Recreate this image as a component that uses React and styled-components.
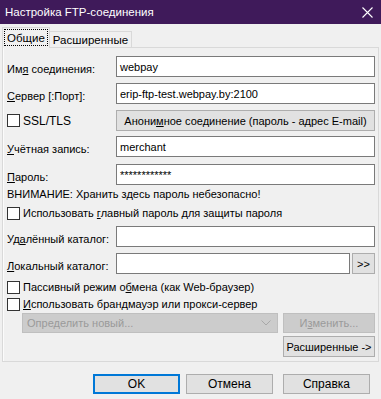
import React from 'react';
import styled, { createGlobalStyle } from 'styled-components';

const Global = createGlobalStyle`
  html, body { margin: 0; padding: 0; background: #f0f0f0; }
  body {
    font-family: "Liberation Sans", Arial, sans-serif;
    font-size: 11px;
    color: #000;
  }
  #root { width: 381px; height: 399px; }
`;

const Window = styled.div`
  width: 381px;
  height: 399px;
  background: #f0f0f0;
  display: flex;
  flex-direction: column;
  overflow: hidden;
`;

const TitleBar = styled.div`
  flex: none;
  height: 24px;
  background: #3f1a5a;
  color: #fff;
  display: flex;
  align-items: center;
  padding: 0 8px 0 5px;
  font-size: 11.5px;
`;

const Title = styled.span`
  flex: 1;
  white-space: nowrap;
`;

const TabStrip = styled.div`
  flex: none;
  height: 23px;
  display: flex;
  align-items: flex-end;
  padding-left: 2px;
  position: relative;
  z-index: 1;
`;

const Tab = styled.div`
  box-sizing: border-box;
  height: ${p => (p.$active ? 21 : 16)}px;
  margin-bottom: ${p => (p.$active ? -1 : 0)}px;
  padding: 0 ${p => (p.$active ? 1 : 3)}px;
  border: 1px solid #d9d9d9;
  border-bottom: none;
  border-left: ${p => (p.$active ? '1px solid #d9d9d9' : 'none')};
  background: #f0f0f0;
  display: flex;
  align-items: ${p => (p.$active ? 'flex-start' : 'center')};
  padding-top: ${p => (p.$active ? 1 : 0)}px;
  white-space: nowrap;
  font-size: 11.5px;
`;

const Focus = styled.span`
  border: 1px dotted #000;
  padding: 0 2px;
  height: 15px;
  display: flex;
  align-items: center;
`;

const Panel = styled.div`
  box-sizing: border-box;
  flex: none;
  height: 315px;
  margin: 0 2px 0 2px;
  border: 1px solid #d9d9d9;
  box-shadow: inset 1px 0 0 #fbfbfb;
  background: #f0f0f0;
  padding: 8px 3px 0 4px;
  display: flex;
  flex-direction: column;
`;

const Row = styled.div`
  display: flex;
  align-items: center;
  height: ${p => p.$h || 21}px;
  margin-top: ${p => p.$mt || 0}px;
  padding-left: ${p => p.$indent || 0}px;
  justify-content: ${p => (p.$end ? 'flex-end' : 'flex-start')};
`;

const Label = styled.label`
  flex: none;
  width: 109px;
  padding-top: ${p => p.$dy ?? 4}px;
  white-space: nowrap;
`;

const Input = styled.div`
  box-sizing: border-box;
  flex: ${p => (p.$w ? 'none' : 1)};
  width: ${p => (p.$w ? `${p.$w}px` : 'auto')};
  height: ${p => p.$h || 21}px;
  background: #fff;
  border: 1px solid #7a7a7a;
  padding: 0 3px;
  display: flex;
  align-items: center;
  white-space: nowrap;
  overflow: hidden;
`;

const Button = styled.div`
  box-sizing: border-box;
  flex: ${p => (p.$grow ? 1 : 'none')};
  width: ${p => (p.$w ? `${p.$w}px` : 'auto')};
  height: ${p => p.$h || 21}px;
  margin-left: ${p => p.$ml || 0}px;
  margin-right: ${p => p.$mr || 0}px;
  background: ${p => (p.$disabled ? '#cccccc' : '#e1e1e1')};
  border: ${p => (p.$default ? '2px solid #0078d7' : p.$disabled ? '1px solid #bfbfbf' : '1px solid #adadad')};
  color: ${p => (p.$disabled ? '#9a9a9a' : '#000')};
  display: flex;
  align-items: center;
  justify-content: center;
  white-space: nowrap;
  font-size: ${p => p.$fs || 11}px;
`;

const Combo = styled.div`
  box-sizing: border-box;
  flex: none;
  width: 256px;
  height: 20px;
  background: #cccccc;
  border: 1px solid #bfbfbf;
  color: #9a9a9a;
  display: flex;
  align-items: center;
  padding: 0 6px 0 4px;
`;

const ComboText = styled.span`
  flex: 1;
`;

const CheckRow = styled.div`
  display: flex;
  align-items: center;
  height: 16px;
  margin-top: ${p => p.$mt || 0}px;
  white-space: nowrap;
`;

const Box = styled.span`
  box-sizing: border-box;
  flex: none;
  width: 13px;
  height: 13px;
  background: #fff;
  border: 1px solid #333;
  margin-right: ${p => p.$gap || 3}px;
`;

const CheckLabel = styled.div`
  flex: none;
  width: 109px;
  display: flex;
  align-items: center;
  font-size: ${p => p.$fs || 11}px;
`;

const Text = styled.div`
  height: 16px;
  line-height: 16px;
  margin-top: ${p => p.$mt || 0}px;
  white-space: nowrap;
`;

const Footer = styled.div`
  flex: none;
  display: flex;
  justify-content: flex-end;
  padding: 12px 11px 0 0;
`;

const U = styled.span`
  text-decoration: underline;
`;

const CloseIcon = () => (
  <svg width="11" height="11" viewBox="0 0 11 11">
    <path d="M0.5 0.5 L10.5 10.5 M10.5 0.5 L0.5 10.5" stroke="#fff" strokeWidth="1.1" />
  </svg>
);

const Chevron = () => (
  <svg width="10" height="6" viewBox="0 0 10 6">
    <path d="M0.5 0.5 L5 5 L9.5 0.5" stroke="#a8a8a8" fill="none" strokeWidth="1" />
  </svg>
);

export default function App() {
  return (
    <Window>
      <Global />
      <TitleBar>
        <Title>Настройка FTP-соединения</Title>
        <CloseIcon />
      </TitleBar>
      <TabStrip>
        <Tab $active>
          <Focus>Общие</Focus>
        </Tab>
        <Tab>Расширенные</Tab>
      </TabStrip>
      <Panel>
        <Row>
          <Label>Им<U>я</U> соединения:</Label>
          <Input>webpay</Input>
        </Row>
        <Row $mt={6}>
          <Label><U>С</U>ервер [:Порт]:</Label>
          <Input>erip-ftp-test.webpay.by:2100</Input>
        </Row>
        <Row $mt={6}>
          <CheckLabel $fs={12}>
            <Box />
            <span>SSL/TLS</span>
          </CheckLabel>
          <Button $grow>Анони<U>м</U>ное соединение (пароль - адрес E-mail)</Button>
        </Row>
        <Row $mt={5}>
          <Label><U>У</U>чётная запись:</Label>
          <Input>merchant</Input>
        </Row>
        <Row $mt={7}>
          <Label $dy={5}><U>П</U>ароль:</Label>
          <Input>************</Input>
        </Row>
        <Text $mt={1}>ВНИМАНИЕ: Хранить здесь пароль небезопасно!</Text>
        <CheckRow $mt={3}>
          <Box />
          <span>Использовать <U>г</U>лавный пароль для защиты пароля</span>
        </CheckRow>
        <Row $mt={5}>
          <Label>Уд<U>а</U>лённый каталог:</Label>
          <Input />
        </Row>
        <Row $mt={6}>
          <Label><U>Л</U>окальный каталог:</Label>
          <Input />
          <Button $w={23} $ml={2}>&gt;&gt;</Button>
        </Row>
        <CheckRow $mt={5}>
          <Box />
          <span>Пассивный режим о<U>б</U>мена (как Web-браузер)</span>
        </CheckRow>
        <CheckRow $mt={1}>
          <Box />
          <span><U>И</U>спользовать брандмауэр или прокси-сервер</span>
        </CheckRow>
        <Row $h={20} $mt={1} $indent={15}>
          <Combo>
            <ComboText>Определить новый...</ComboText>
            <Chevron />
          </Combo>
          <Button $disabled $w={92} $h={20} $ml={5}>И<U>з</U>менить...</Button>
        </Row>
        <Row $mt={3} $end>
          <Button $w={92}>Расширенные -&gt;</Button>
        </Row>
      </Panel>
      <Footer>
        <Button $default $w={87} $h={20} $mr={6} $fs={12}>OK</Button>
        <Button $w={87} $h={20} $mr={10} $fs={12}>Отмена</Button>
        <Button $w={87} $h={20} $fs={12}>Справка</Button>
      </Footer>
    </Window>
  );
}
